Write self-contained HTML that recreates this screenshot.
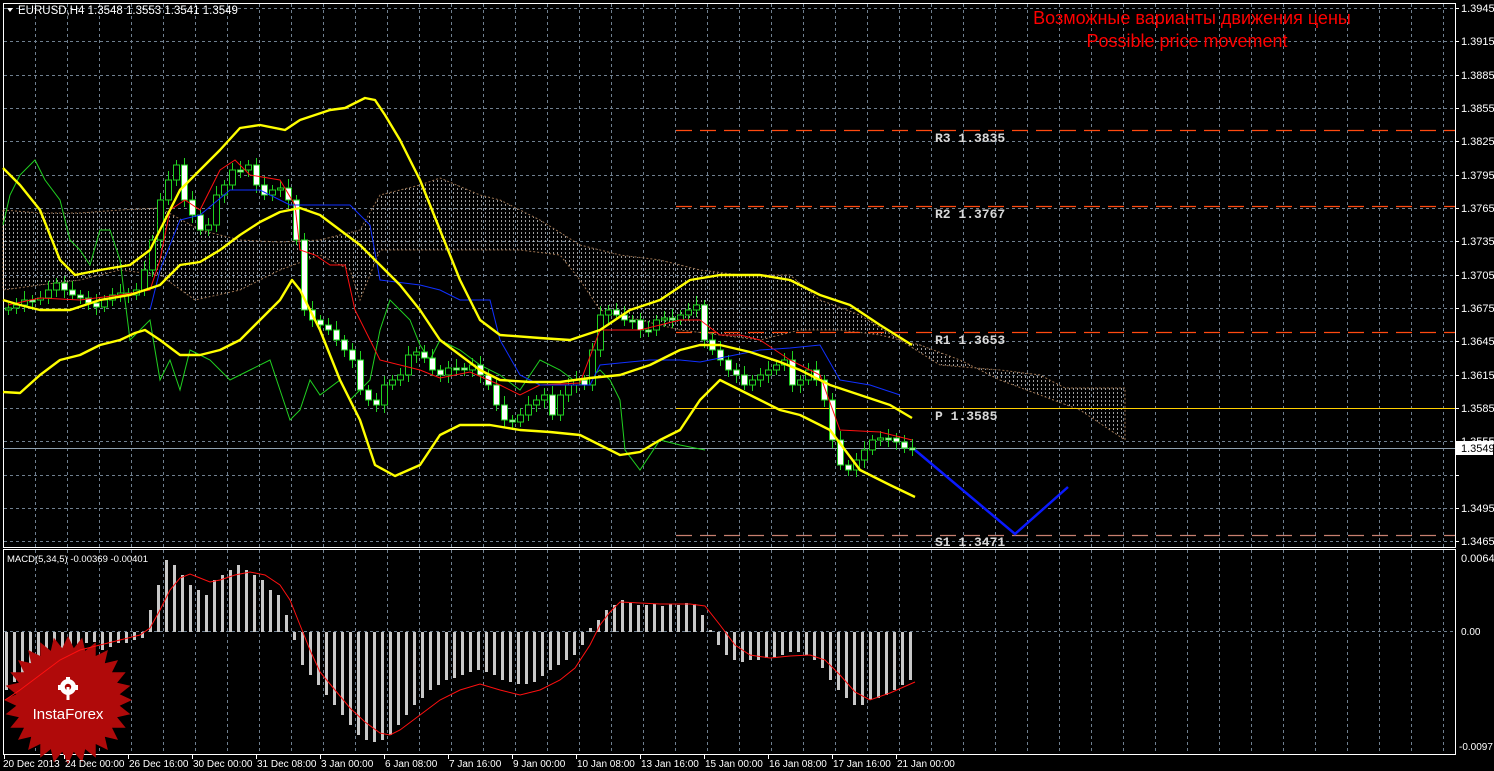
<!DOCTYPE html>
<html><head><meta charset="utf-8"><style>
html,body{margin:0;padding:0;background:#000;}
svg{display:block;font-family:"Liberation Sans",sans-serif;}
</style></head><body>
<svg id="s" width="1494" height="771" viewBox="0 0 1494 771" xmlns="http://www.w3.org/2000/svg">
<defs>
<pattern id="dots" width="4" height="4" patternUnits="userSpaceOnUse"><rect x="1" y="0" width="1" height="2" fill="#e0e0e0"/></pattern>
</defs>
<rect width="1494" height="771" fill="#000"/>
<g id="grid" stroke="#6f7f8f" stroke-width="1" stroke-dasharray="3,3"></g>
<rect x="3.5" y="3.5" width="1452" height="544" fill="none" stroke="#fff"/>
<rect x="3.5" y="549.5" width="1452" height="205" fill="none" stroke="#fff"/>
<path d="M3,210 L40,213 L80,213 L120,210 L160,208 L200,230 L240,240 L280,242 L320,240 L360,230 L380,195 L420,185 L440,178 L480,195 L500,200 L540,220 L580,245 L620,255 L660,260 L700,270 L740,275 L790,275 L820,300 L860,315 L900,340 L940,365 L1000,370 L1040,375 L1065,388 L1125,388 L1125,440 L1080,410 L1040,395 L1000,380 L960,360 L920,345 L880,335 L840,330 L800,330 L760,340 L720,335 L680,330 L640,320 L600,310 L580,280 L560,255 L520,250 L480,250 L430,250 L380,250 L360,300 L350,270 L320,255 L280,270 L240,290 L195,300 L160,275 L120,270 L80,280 L40,285 L3,290 Z" fill="url(#dots)" stroke="#d9a070" stroke-width="1" stroke-dasharray="2,2" opacity="0.7"/>
<g stroke="#ff4a10" stroke-width="1.3" stroke-dasharray="16,8">
<line x1="676" y1="130.5" x2="1455" y2="130.5"/>
<line x1="676" y1="206.5" x2="1455" y2="206.5"/>
<line x1="676" y1="332.5" x2="1455" y2="332.5"/>
</g>
<line x1="676" y1="535.5" x2="1455" y2="535.5" stroke="#c88070" stroke-width="1.3" stroke-dasharray="16,8"/>
<line x1="676" y1="408.5" x2="1455" y2="408.5" stroke="#ffd000" stroke-width="1"/>
<line x1="3" y1="448.5" x2="1455" y2="448.5" stroke="#8ea0b0" stroke-width="1"/>
<g font-family="'Liberation Mono',monospace" font-weight="bold" font-size="13" fill="#d8d8d8">
<text x="935" y="142">R3 1.3835</text>
<text x="935" y="218">R2 1.3767</text>
<text x="935" y="344">R1 1.3653</text>
<text x="935" y="420">P  1.3585</text>
<text x="935" y="546">S1 1.3471</text>
</g>
<polyline fill="none" stroke="#20d020" stroke-width="1" points="3,225 10,195 20,175 35,160 45,180 60,200 70,240 80,250 90,265 100,230 110,230 120,260 130,340 140,330 150,320 160,380 170,360 180,390 190,350 200,355 210,360 230,380 250,370 270,360 280,390 290,420 300,410 310,380 320,395 340,380 350,400 360,390 370,380 380,330 390,300 400,310 410,320 420,345 430,360 440,340 460,350 480,365 500,375 520,390 540,360 560,370 580,385 600,370 610,380 620,400 625,450 640,470 660,440 680,445 705,450"/>
<g id="candles"></g>
<polyline fill="none" stroke="#ff1010" stroke-width="1" points="8,305 40,298 80,300 120,295 150,290 160,260 170,210 185,200 200,210 220,170 235,160 250,175 280,180 295,205 300,250 315,255 330,265 345,265 355,310 380,360 420,370 440,378 470,372 500,385 520,395 540,385 580,383 600,330 640,330 680,320 700,320 720,335 740,335 760,340 790,360 820,375 840,430 880,432 912,440"/>
<polyline fill="none" stroke="#1030ff" stroke-width="1" points="150,310 160,270 180,220 200,215 230,190 260,190 290,205 320,205 350,205 370,225 380,280 420,285 440,290 460,300 490,300 500,340 520,375 540,385 590,385 600,365 650,360 680,360 700,362 760,350 790,348 820,345 840,380 870,385 900,395"/>
<g fill="none" stroke="#ffff00" stroke-width="2.4" stroke-linejoin="round">
<polyline points="3,168 20,185 40,210 60,260 75,275 100,270 130,265 150,250 160,230 180,190 200,170 220,150 240,128 260,125 285,130 300,120 330,110 345,108 365,98 375,100 385,115 400,140 420,180 440,230 460,280 480,320 500,335 540,338 570,340 600,330 630,310 660,300 690,280 720,275 760,275 790,280 820,295 850,305 880,325 912,345"/>
<polyline points="3,300 20,305 40,310 70,310 100,300 130,295 160,285 180,265 200,262 220,250 240,235 260,222 280,212 300,208 320,215 340,230 360,245 380,265 400,285 420,310 440,340 460,355 480,370 500,380 530,382 560,382 590,378 620,375 650,365 680,350 700,345 720,345 750,352 780,362 800,370 830,385 860,395 890,405 912,418"/>
<polyline points="3,392 20,393 40,375 60,360 80,355 100,345 120,340 135,333 145,330 160,340 180,355 200,355 220,350 240,340 260,320 280,300 292,280 300,290 320,330 340,380 360,420 375,465 395,476 420,465 440,435 460,425 490,425 520,430 550,432 580,435 600,445 620,455 640,452 660,440 680,430 700,400 720,380 740,390 760,400 780,410 800,415 830,430 860,470 890,485 915,497"/>
</g>
<polyline fill="none" stroke="#0a1aff" stroke-width="2.5" points="915,450 1015,534 1068,487"/>
<text x="1192" y="24" font-size="18" fill="#ff0000" text-anchor="middle">Возможные варианты движения цены</text>
<text x="1187" y="47" font-size="18" fill="#ff0000" text-anchor="middle">Possible price movement</text>
<polygon points="7,8 13,8 10,12" fill="#fff"/>
<text x="18" y="14" font-size="11.5" fill="#fff">EURUSD,H4  1.3548 1.3553 1.3541 1.3549</text>
<g id="axis" font-size="11" fill="#fff"></g>
<rect x="1456" y="441" width="37" height="14" fill="#fff"/>
<text x="1461" y="452" font-size="11" fill="#000">1.3549</text>
<g id="macd"></g>
<polyline id="sig" fill="none" stroke="#ff1010" stroke-width="1" points="5,700 20,690 40,675 60,660 80,650 100,645 120,640 140,635 150,628 160,610 170,590 180,578 190,574 200,578 210,582 220,580 235,575 250,572 265,575 280,585 290,600 300,625 310,650 320,672 335,690 350,708 365,722 380,733 390,735 400,730 420,715 440,700 460,690 480,684 500,690 520,695 540,690 560,680 575,668 590,645 600,625 610,612 620,602 640,603 660,604 690,604 705,606 720,625 735,645 750,655 770,658 790,656 810,655 825,660 840,675 855,692 870,700 890,693 915,682"/>
<text x="7" y="562" font-size="9.5" fill="#fff">MACD(5,34,5) -0.00369 -0.00401</text>
<text x="1461" y="562" font-size="11" fill="#fff">0.00649</text>
<text x="1461" y="635" font-size="10" fill="#fff">0.00</text>
<text x="1459" y="750" font-size="10" fill="#fff">-0.0097</text>
<polygon id="star" fill="#b00a0a"/>
<g fill="#fff" transform="translate(68,687)">
<circle cx="0" cy="0" r="8"/><circle cx="0" cy="0" r="3.2" fill="#a00"/>
<rect x="-1.5" y="0" width="3" height="13"/>
<rect x="-10" y="-2" width="3" height="5" /><rect x="7" y="-2" width="3" height="5"/><rect x="-2" y="-10" width="4" height="3"/>
</g>
<text x="68" y="719" font-size="15" fill="#fff" text-anchor="middle">InstaForex</text>
<g id="bottom" font-size="10" fill="#fff"></g>
</svg>
<script>
var NS="http://www.w3.org/2000/svg";
function el(t,a,p,txt){var e=document.createElementNS(NS,t);for(var k in a)e.setAttribute(k,a[k]);if(txt)e.textContent=txt;document.getElementById(p).appendChild(e);return e;}
for(var x=35;x<1455;x+=32){el('line',{x1:x+.5,y1:4,x2:x+.5,y2:547},'grid');el('line',{x1:x+.5,y1:550,x2:x+.5,y2:754},'grid');}
for(var i=0;i<17;i++){var p=1.3945-0.003*i;var y=Math.round(8+(1.3945-p)*11111);el('line',{x1:4,y1:y+.5,x2:1455,y2:y+.5},'grid');
 if(i!=14)el('text',{x:1461,y:y+4},'axis',p.toFixed(4));el('line',{x1:1455,y1:y+.5,x2:1459,y2:y+.5,stroke:'#fff','stroke-dasharray':'none'},'grid');}
el('line',{x1:4,y1:631.5,x2:1455,y2:631.5},'grid');
var cy=[308,305,300,300,298,290,283,290,295,298,303,307,300,295,293,295,290,270,240,200,180,165,200,215,230,225,195,185,170,170,165,185,195,190,188,200,240,310,320,325,330,340,350,360,390,400,405,385,380,375,355,352,358,370,375,368,368,370,365,375,385,405,420,422,415,405,400,395,415,395,385,380,385,350,315,310,315,320,320,330,330,320,318,320,315,310,305,340,350,360,370,375,385,380,375,370,365,360,385,380,370,380,400,440,465,470,460,450,440,438,438,442,448,450];
var prev=310;
for(var i=0;i<cy.length;i++){var x=8+8*i,c=cy[i],o=prev;var t=Math.min(o,c),b=Math.max(o,c);if(b-t<2)b=t+2;
 el('line',{x1:x+.5,y1:t-5-(i%3)*2,x2:x+.5,y2:b+5+(i%4),stroke:'#20d020'},'candles');
 var bull=c<o;el('rect',{x:x-2.5,y:t,width:6,height:b-t,fill:bull?'#000':'#fff',stroke:'#20d020','stroke-width':1},'candles');prev=c;}
var mb=[690,682,677,673,663,658,655,652,648,645,643,642,650,647,643,643,640,638,610,585,560,565,575,585,590,595,580,575,570,565,570,575,580,590,595,615,640,665,675,685,695,705,715,725,735,740,742,740,735,725,715,705,698,690,685,680,678,675,672,670,672,675,680,682,684,684,682,676,670,665,660,655,645,628,620,610,605,600,603,605,605,604,606,604,605,603,604,615,630,645,655,660,662,660,660,658,657,655,652,652,655,660,668,680,690,698,705,705,700,698,695,690,685,680];
for(var i=0;i<mb.length;i++){var x=5+8*i,y=mb[i];el('rect',{x:x,y:Math.min(y,632),width:3,height:Math.max(1,Math.abs(y-632)),fill:'#c8c8c8'},'macd');}
document.getElementById('macd').parentNode.appendChild(document.getElementById('sig'));
var pts=[],n=28;for(var i=0;i<2*n;i++){var r=i%2?52:64,a=Math.PI*i/n;pts.push((68+r*Math.cos(a)).toFixed(1)+','+(700+r*Math.sin(a)).toFixed(1));}
document.getElementById('star').setAttribute('points',pts.join(' '));
var lb=["20 Dec 2013","24 Dec 00:00","26 Dec 16:00","30 Dec 00:00","31 Dec 08:00","3 Jan 00:00","6 Jan 08:00","7 Jan 16:00","9 Jan 00:00","10 Jan 08:00","13 Jan 16:00","15 Jan 00:00","16 Jan 08:00","17 Jan 16:00","21 Jan 00:00"];
for(var i=0;i<lb.length;i++){var xx=i==0?3:66+64*(i-1)-1;el('text',{x:xx,y:767},'bottom',lb[i]);el('line',{x1:(i==0?4:xx-1)+.5,y1:755,x2:(i==0?4:xx-1)+.5,y2:759,stroke:'#fff'},'bottom');}
</script>
</body></html>
